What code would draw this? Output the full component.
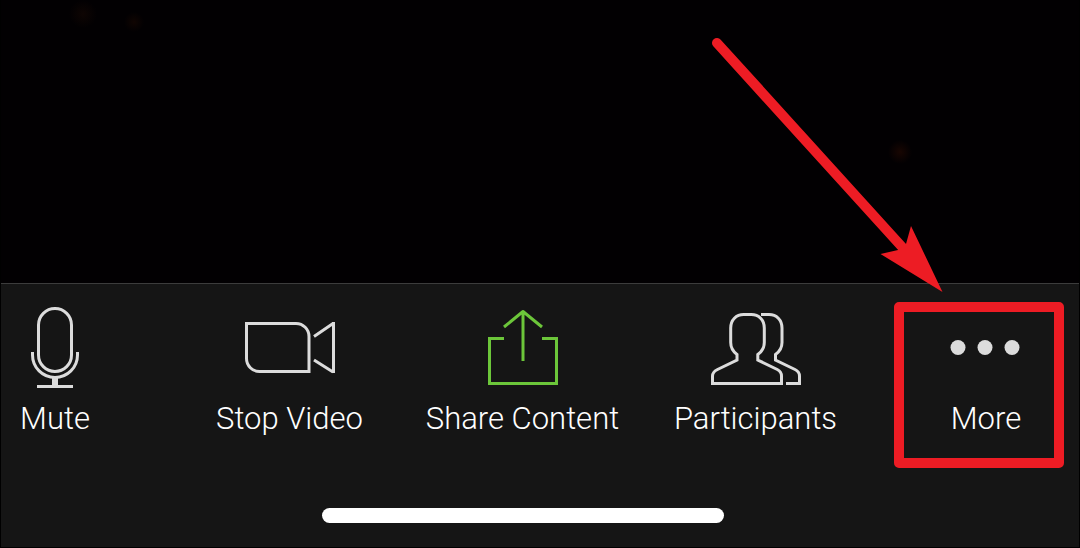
<script>
  let muted = false
  let videoOn = true
</script>

<main class="meeting">
  <section class="video" aria-label="Video"></section>

  <footer class="toolbar">
    <nav class="actions">
      <button class="action first" on:click={() => {muted = !muted}}>
        <svg class="icon" viewBox="0 0 90 84" aria-hidden="true">
          <rect x="28.5" y="2.5" width="33" height="63" rx="16.5" />
          <path d="M22.5 46v3a22.5 22.5 0 0 0 45 0v-3" />
          <path class="solid" d="M42 71h6v8h15v3H27v-3h15z" />
        </svg>
        <span>{muted ? 'Unmute' : 'Mute'}</span>
      </button>

      <button class="action" on:click={() => {videoOn = !videoOn}}>
        <svg class="icon" viewBox="0 0 90 84" aria-hidden="true">
          <path d="M1.5 17.5H51a13 13 0 0 1 13 13v35H14.5a13 13 0 0 1-13-13z" />
          <path d="M88.5 16v51" />
          <path d="M69 30.5 88 17.5M69 54l19 12" />
        </svg>
        <span>{videoOn ? 'Stop Video' : 'Start Video'}</span>
      </button>

      <button class="action">
        <svg class="icon green" viewBox="0 0 90 84" aria-hidden="true">
          <path d="M26 32.5H11.5v45h67v-45H64" />
          <path d="M45 5v50M26 21 45 5.5 64 21" stroke-linejoin="round" />
        </svg>
        <span>Share Content</span>
      </button>

      <button class="action">
        <svg class="icon" viewBox="0 0 90 84" aria-hidden="true">
          <path d="M1.5 77.5V70c0-3 2-5 5-6.5L26 54v-5.5c-4-3-6.300-7-6.300-12V22c0-8 5.500-13.500 13-13.500h7.600c7.500 0 13 5.500 13 13.500v14.500c0 5-2.300 9-6.500 12V54l19.500 9.500c3 1.500 4.200 3.500 4.200 6.500v7.500z" />
          <path d="M50 8.500h8c7.500 0 13 5.500 13 13.500v14.500c0 5-2.300 9-6.500 12V54L84 63.500c3 1.500 4.500 3.500 4.500 6.500v7.500H75" />
        </svg>
        <span>Participants</span>
      </button>

      <button class="action last">
        <svg class="icon" viewBox="0 0 90 84" aria-hidden="true">
          <circle class="solid" cx="17" cy="41.5" r="7.5" />
          <circle class="solid" cx="44" cy="41.5" r="7.5" />
          <circle class="solid" cx="71" cy="41.5" r="7.5" />
        </svg>
        <span>More</span>
      </button>

      <div class="home"></div>
    </nav>

    <!-- callout around the More button -->
    <div class="highlight"></div>
    <svg class="arrow" viewBox="0 0 240 260" aria-hidden="true">
      <path d="M17 13 203 218" stroke="#ed1c24" stroke-width="10" stroke-linecap="round" />
      <path d="M242.500 262 211 196 206 214 198 220 180.500 224z" fill="#ed1c24" />
    </svg>
  </footer>
</main>

<style>
  :global(body) {
    background: #000;
  }
  .meeting {
    box-sizing: border-box;
    display: flex;
    flex-direction: column;
    min-height: 100vh;
    padding: 0 1px 1px;
    background: #000;
    font-family: Roboto, "Liberation Sans", sans-serif;
  }
  .video {
    flex: 1;
    background:
      radial-gradient(circle at 899px 152px, #180602, transparent 12px),
      radial-gradient(circle at 133px 22px, #100502, transparent 10px),
      radial-gradient(circle at 82px 14px, #0e0503, transparent 14px),
      #020002;
  }
  .toolbar {
    position: relative;
    border-top: 1px solid #3c3c3c;
    background: #151515;
    padding: 22px 0 24px;
  }
  .actions {
    display: grid;
    grid-template-columns: 172fr 233fr 233fr 233fr 207fr;
    row-gap: 71px;
  }
  .action {
    display: flex;
    flex-direction: column;
    align-items: center;
    gap: 11px;
    margin: 0;
    padding: 0;
    border: none;
    background: none;
    color: #fff;
    font-family: inherit;
    font-size: 31px;
    font-weight: 300;
    line-height: 36px;
    white-space: nowrap;
    cursor: pointer;
  }
  .first {
    justify-self: start;
    margin-left: 9px;
  }
  .last {
    justify-self: end;
    margin-right: 48px;
  }
  .icon {
    width: 90px;
    height: 84px;
    fill: none;
    stroke: #dcdcdc;
    stroke-width: 3;
  }
  .green {
    stroke: #6cc63a;
  }
  .solid {
    fill: #dcdcdc;
    stroke: none;
  }
  .home {
    grid-column: 2 / 5;
    justify-self: center;
    width: 402px;
    height: 15px;
    border-radius: 8px;
    background: #fff;
  }
  .highlight {
    position: absolute;
    top: 18px;
    right: 15px;
    box-sizing: border-box;
    width: 170px;
    height: 166px;
    border: 10px solid #ed1c24;
    border-radius: 5px;
    pointer-events: none;
  }
  .arrow {
    position: absolute;
    top: -254px;
    right: 139px;
    width: 240px;
    height: 260px;
    fill: none;
    overflow: visible;
    pointer-events: none;
  }
</style>
